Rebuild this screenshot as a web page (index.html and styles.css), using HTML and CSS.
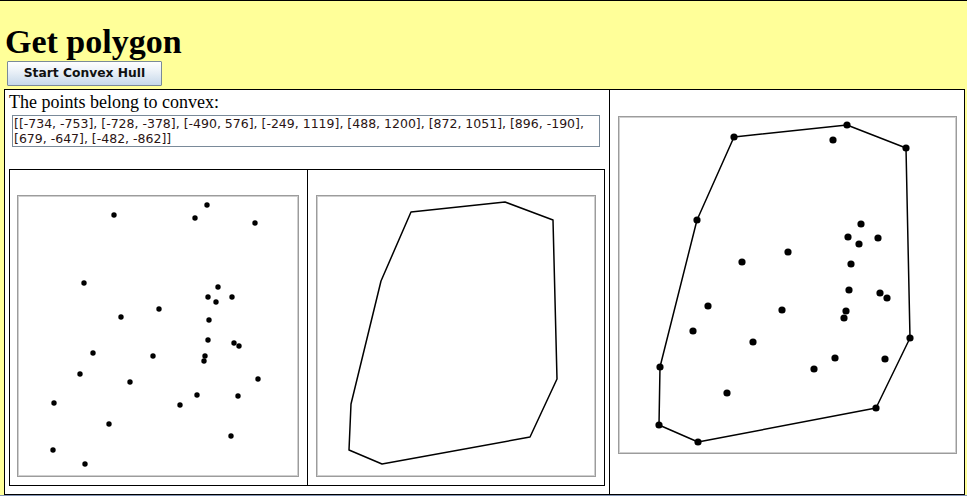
FILE: index.html
```html
<!DOCTYPE html>
<html>
<head>
<meta charset="utf-8">
<link rel="stylesheet" href="styles.css">
</head>
<body>
<h1 class="title">Get polygon</h1>
<button class="btn" type="button">Start Convex Hull</button>
<div class="main">
  <div class="left">
    <div class="caption">The points belong to convex:</div>
    <div class="points">[[-734, -753], [-728, -378], [-490, 576], [-249, 1119], [488, 1200], [872, 1051], [896, -190],<br>[679, -647], [-482, -862]]</div>
    <div class="inner">
      <div class="sub sub-a">
        <div class="canvas canvas-a">
          <svg class="plot" width="278" height="278" viewBox="19 197 278 278">
            <g class="dots">
              <circle cx="114" cy="215" r="2.7"/><circle cx="207" cy="205" r="2.7"/><circle cx="195" cy="218" r="2.7"/><circle cx="255" cy="223" r="2.7"/>
              <circle cx="84" cy="283" r="2.7"/><circle cx="218" cy="287" r="2.7"/><circle cx="208" cy="297" r="2.7"/><circle cx="232" cy="297" r="2.7"/>
              <circle cx="216" cy="302" r="2.7"/><circle cx="159" cy="309" r="2.7"/><circle cx="121" cy="317" r="2.7"/><circle cx="209" cy="320" r="2.7"/>
              <circle cx="93" cy="353" r="2.7"/><circle cx="208" cy="340" r="2.7"/><circle cx="234" cy="343" r="2.7"/><circle cx="239" cy="346" r="2.7"/>
              <circle cx="153" cy="356" r="2.7"/><circle cx="205" cy="356" r="2.7"/><circle cx="204" cy="361" r="2.7"/><circle cx="80" cy="374" r="2.7"/>
              <circle cx="130" cy="382" r="2.7"/><circle cx="258" cy="379" r="2.7"/><circle cx="197" cy="395" r="2.7"/><circle cx="238" cy="396" r="2.7"/>
              <circle cx="54" cy="403" r="2.7"/><circle cx="180" cy="405" r="2.7"/><circle cx="109" cy="424" r="2.7"/><circle cx="231" cy="436" r="2.7"/>
              <circle cx="53" cy="450" r="2.7"/><circle cx="85" cy="464" r="2.7"/>
            </g>
          </svg>
        </div>
      </div>
      <div class="sub sub-b">
        <div class="canvas canvas-b">
          <svg class="plot" width="276" height="278" viewBox="318 197 276 278">
            <polygon class="hull" points="411,212 505,202 553,220 557,379 530,437 382,464 349,450 351,404 381,281"/>
          </svg>
        </div>
      </div>
    </div>
  </div>
  <div class="right">
    <div class="canvas canvas-c">
      <svg class="plot" width="335" height="334" viewBox="620 118 335 334">
        <polygon class="hull" points="734,137 847,125 906,148 910,338 876,408 698,442 659,425 660,367 697,220"/>
        <g class="dots">
          <circle cx="734" cy="137" r="3.6"/><circle cx="847" cy="125" r="3.6"/><circle cx="906" cy="148" r="3.6"/><circle cx="910" cy="338" r="3.6"/>
          <circle cx="876" cy="408" r="3.6"/><circle cx="698" cy="442" r="3.6"/><circle cx="659" cy="425" r="3.6"/><circle cx="660" cy="367" r="3.6"/>
          <circle cx="697" cy="220" r="3.6"/>
          <circle cx="833" cy="140" r="3.6"/><circle cx="861" cy="224" r="3.6"/><circle cx="848" cy="237" r="3.6"/><circle cx="878" cy="238" r="3.6"/>
          <circle cx="859" cy="244" r="3.6"/><circle cx="788" cy="252" r="3.6"/><circle cx="742" cy="262" r="3.6"/><circle cx="851" cy="264" r="3.6"/>
          <circle cx="849" cy="290" r="3.6"/><circle cx="880" cy="293" r="3.6"/><circle cx="887" cy="298" r="3.6"/><circle cx="708" cy="306" r="3.6"/>
          <circle cx="782" cy="310" r="3.6"/><circle cx="846" cy="311" r="3.6"/><circle cx="844" cy="318" r="3.6"/><circle cx="693" cy="331" r="3.6"/>
          <circle cx="753" cy="342" r="3.6"/><circle cx="835" cy="358" r="3.6"/><circle cx="885" cy="359" r="3.6"/><circle cx="814" cy="369" r="3.6"/>
          <circle cx="727" cy="393" r="3.6"/>
        </g>
      </svg>
    </div>
  </div>
</div>
<div class="edge"></div>
</body>
</html>
```
FILE: styles.css
```css
html, body {
  margin: 0;
  padding: 0;
}
body {
  background: #ffff99;
  border-top: 1px solid #000;
  height: 495px;
  overflow: hidden;
  font-family: "DejaVu Sans", sans-serif;
}
.title {
  margin: 23px 0 0 5px;
  font: bold 34px/36px "Liberation Serif", serif;
  color: #000;
  height: 36px;
}
.btn {
  display: flex;
  align-items: center;
  justify-content: center;
  box-sizing: border-box;
  width: 155px;
  height: 25px;
  margin: 1px 0 0 7px;
  padding: 0;
  border: 1px solid #7a8a99;
  border-radius: 1px;
  background: linear-gradient(#fefeff 0%, #eef3f9 35%, #c6d8ea 100%);
  font: bold 12.3px/1 "DejaVu Sans", sans-serif;
  color: #111;
}
.main {
  display: flex;
  box-sizing: border-box;
  width: 961px;
  height: 406px;
  margin: 3px 0 0 4px;
  border: 1px solid #000;
  background: #fff;
}
.left {
  box-sizing: border-box;
  width: 605px;
  border-right: 1px solid #000;
  padding: 2px 4px 0 4px;
  display: flex;
  flex-direction: column;
}
.caption {
  font: 18px/20px "Liberation Serif", serif;
  color: #000;
}
.points {
  box-sizing: border-box;
  width: 588px;
  height: 32px;
  margin: 3px 0 0 3px;
  padding: 0 0 0 1px;
  border: 1px solid #7a8a99;
  font: 12.5px/15px "DejaVu Sans", sans-serif;
  color: #2a1414;
  white-space: nowrap;
}
.inner {
  display: flex;
  box-sizing: border-box;
  width: 596px;
  height: 317px;
  margin-top: 22px;
  border: 1px solid #000;
}
.sub {
  box-sizing: border-box;
  padding-top: 25px;
}
.sub-a {
  width: 298px;
  border-right: 1px solid #000;
  padding-left: 7px;
}
.sub-b {
  flex: 1;
  padding-left: 8px;
}
.right {
  flex: 1;
  padding: 26px 0 0 8px;
}
.canvas {
  box-sizing: border-box;
  border: 1px solid #9c9c9c;
  padding: 1px;
  box-shadow: inset 0 0 0 1px #cfcfcf;
  background: #fff;
}
.canvas-a { width: 282px; height: 282px; }
.canvas-b { width: 280px; height: 282px; }
.canvas-c { width: 339px; height: 338px; }
.plot {
  display: block;
}
.dots circle {
  fill: #000;
}
.hull {
  fill: none;
  stroke: #000;
  stroke-width: 1.5;
  stroke-linejoin: round;
}
.edge {
  height: 2px;
  background: #8394b4;
}
```
